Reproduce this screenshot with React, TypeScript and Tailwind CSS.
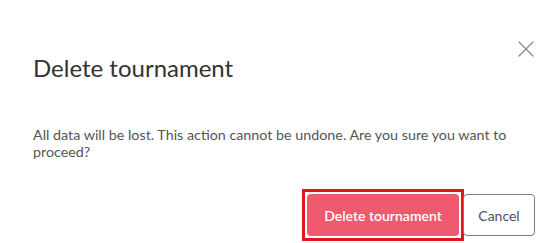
import { X } from 'lucide-react';

const App = () => {
  return (
    <div className="relative w-[548px] h-[243px] bg-white overflow-hidden font-['Lato',_'Noto_Sans',_sans-serif]">
      <button className="absolute top-[35px] right-[8px] w-[28px] h-[28px] flex items-center justify-center text-[#8a8a8a]">
        <X size={28} strokeWidth={1.1} />
      </button>

      <div className="px-[33px] pt-[53px]">
        <h2 className="text-[24px] leading-[30px] text-[#333333]">Delete tournament</h2>
        <p className="mt-[43px] text-[14.3px] leading-[17px] text-[#555555]">
          All data will be lost. This action cannot be undone. Are you sure you want to proceed?
        </p>
      </div>

      <div className="flex justify-end items-center pr-[13px] mt-[29px]">
        <div className="border-[3px] border-[#e3151f] p-[2px] -mr-[1px]">
          <button className="h-[42px] w-[152px] rounded-[4px] bg-[#ef5a6e] text-white text-[14px] font-semibold">
            Delete tournament
          </button>
        </div>
        <button className="h-[42px] w-[72px] rounded-[4px] border border-[#7a7d85] text-[#4a4f5c] text-[14px]">
          Cancel
        </button>
      </div>
    </div>
  );
};

export default App;
